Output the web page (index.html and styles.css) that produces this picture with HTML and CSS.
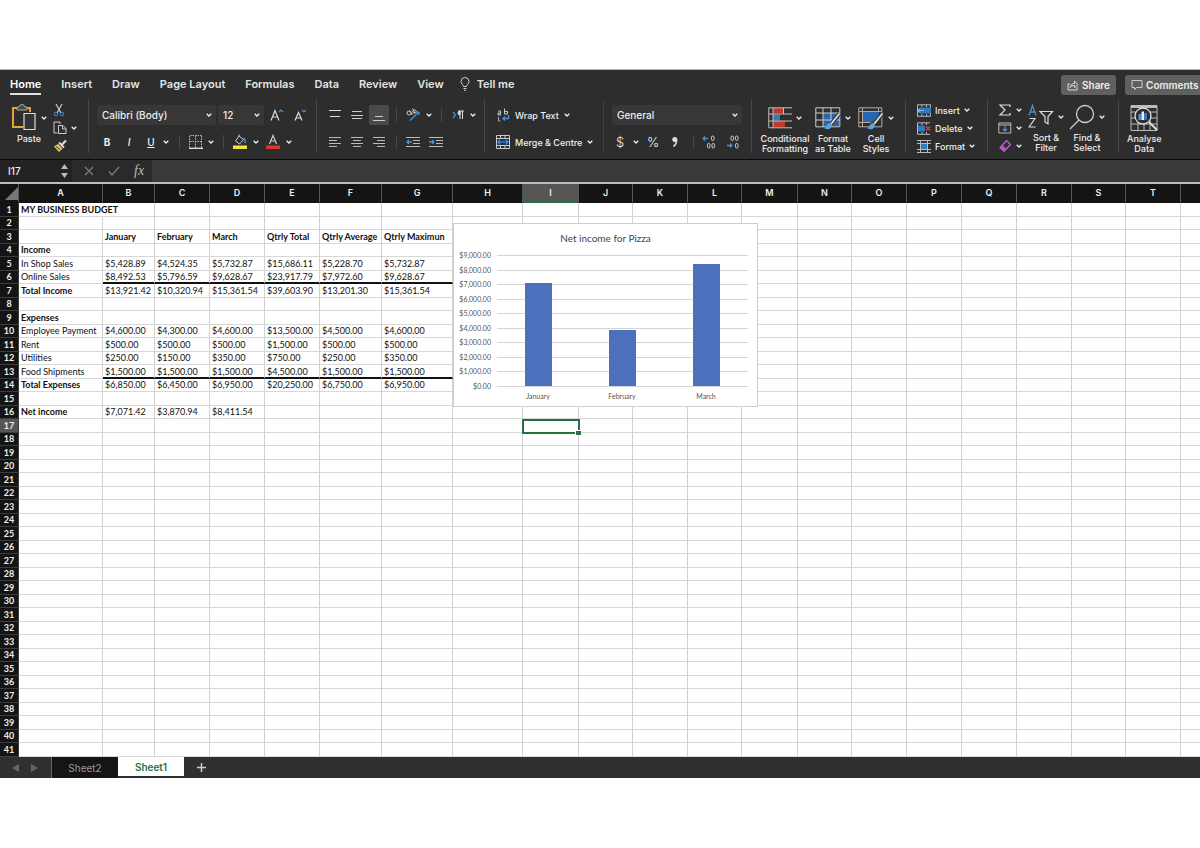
FILE: index.html
```html
<!DOCTYPE html>
<html lang="en">
<head>
<meta charset="utf-8">
<title>My Business Budget</title>
<link rel="stylesheet" href="styles.css">
</head>
<body>
<svg class="defs" aria-hidden="true">
  <symbol id="chev" viewBox="0 0 6 4"><path d="M.7.8 3 3l2.300-2.200" fill="none" stroke="#eee" stroke-width="1.300"/></symbol>
</svg>
<main class="app">
  <header class="tabs">
    <nav class="tab-list">
      <a class="tab tab-active" href="#">Home</a>
      <a class="tab" href="#">Insert</a>
      <a class="tab" href="#">Draw</a>
      <a class="tab" href="#">Page Layout</a>
      <a class="tab" href="#">Formulas</a>
      <a class="tab" href="#">Data</a>
      <a class="tab" href="#">Review</a>
      <a class="tab" href="#">View</a>
      <a class="tab tell" href="#"><svg width="10" height="14" viewBox="0 0 10 14" fill="none" stroke="#ccc"><path d="M3.500 9.500C3.500 7.500 1 7 1 4.500a4 4 0 0 1 8 0C9 7 6.500 7.500 6.500 9.500zM3.500 11.500h3M4 13.300h2"/></svg>Tell me</a>
    </nav>
    <div class="actions">
      <button class="pill"><svg width="12" height="12" viewBox="0 0 12 12" fill="none" stroke="#ddd"><path d="M3 5H1v6h9V8M3 8.500C3.500 5.500 5 4.500 7.500 4.500V2.200L11 5.500 7.500 8.500V6.500C5.500 6.500 4 7 3 8.500z"/></svg>Share</button>
      <button class="pill"><svg width="12" height="12" viewBox="0 0 12 12" fill="none" stroke="#ccc"><path d="M1 1.500h10v7H5.500L3.500 10.800V8.500H1z"/></svg>Comments</button>
    </div>
  </header>

  <section class="ribbon">
    <div class="group clipboard">
      <button class="big"><span class="art">
        <svg width="26" height="27" viewBox="0 0 26 27" fill="none"><path d="M7 4H2v19h10M15 4h4v4" stroke="#e5a33c" stroke-width="2"/><path d="M6 6V3h2.500a2.500 2.500 0 0 1 5 0H16v3z" fill="#444" stroke="#aaa"/><path d="M13 9.500h11v16H13z" fill="#333" stroke="#ddd" stroke-width="1.200"/></svg>
        <svg class="chev"><use href="#chev"/></svg></span>Paste</button>
      <div class="trio">
        <button aria-label="Cut"><svg width="12" height="14" viewBox="0 0 12 14" fill="none"><path d="M3 1l5 9M9 1L4 10" stroke="#ccc" stroke-width="1.200"/><circle cx="3" cy="11" r="1.800" stroke="#4a90d9"/><circle cx="9" cy="11" r="1.800" stroke="#4a90d9"/></svg></button>
        <button aria-label="Copy"><svg width="14" height="14" viewBox="0 0 14 14" fill="none" stroke="#ccc"><path d="M4.500 12H1V1h6v2M5.500 4.500h4.500l3 3V12.500H5.500zM9.500 4.500V8h3.500"/></svg><svg class="chev"><use href="#chev"/></svg></button>
        <button aria-label="Format painter"><svg width="14" height="14" viewBox="0 0 14 14" fill="none"><path d="M13 1.500L8.500 6" stroke="#ddd" stroke-width="2.200"/><path d="M6 3.500l5 5" stroke="#ddd" stroke-width="1.800"/><path d="M5 5l4.500 4.500L6 13 1 7.500z" fill="#e8c75a"/><path d="M3 7.500l4 3" stroke="#333"/></svg></button>
      </div>
    </div>

    <div class="group font">
      <div class="line fields">
        <label class="pick font-name"><select aria-label="Font"><option>Calibri (Body)</option></select><svg class="chev"><use href="#chev"/></svg></label>
        <label class="pick font-size"><select aria-label="Font size"><option>12</option></select><svg class="chev"><use href="#chev"/></svg></label>
        <button class="tool" aria-label="Grow font"><svg width="14" height="14" viewBox="0 0 14 14" fill="none"><path d="M1 12.500L5 2.500l4 10M2.500 9h5" stroke="#ddd" stroke-width="1.200"/><path d="M9 4l2-2 2 2" stroke="#4a90d9" stroke-width="1.200"/></svg></button>
        <button class="tool" aria-label="Shrink font"><svg width="14" height="14" viewBox="0 0 14 14" fill="none"><path d="M2 12.500L5.500 4.500l3.500 8M3.500 10h4" stroke="#ddd" stroke-width="1.200"/><path d="M9 2l2 2 2-2" stroke="#4a90d9" stroke-width="1.200"/></svg></button>
      </div>
      <div class="line styles-row">
        <button class="glyph bold">B</button><button class="glyph italic">I</button><button class="glyph under">U</button><svg class="chev"><use href="#chev"/></svg><i class="sep"></i>
        <button aria-label="Borders"><svg width="14" height="14" viewBox="0 0 14 14" fill="none" stroke="#bbb"><path d="M1 .5h12M1 6.500h12M.5 1v12M6.500 1v12M12.500 1v12" stroke-dasharray="1.500 1"/><path d="M0 13.300h14" stroke="#eee" stroke-width="1.300"/></svg></button><svg class="chev"><use href="#chev"/></svg><i class="sep"></i>
        <button aria-label="Fill colour"><svg width="14" height="16" viewBox="0 0 14 16" fill="none"><path d="M6 2L2.500 7 6.500 10 10.500 5.500z M6 2V.5" stroke="#ccc"/><path d="M10.500 4c1.500 1 2 3 1.500 5" stroke="#4a90d9" stroke-width="1.500"/><path d="M0 11.500h14V15H0z" fill="#f4e636"/></svg></button><svg class="chev"><use href="#chev"/></svg>
        <button aria-label="Font colour"><svg width="14" height="16" viewBox="0 0 14 16" fill="none"><path d="M3.500 10L7 1.500l3.500 8.500M4.800 7h4.400" stroke="#ccc" stroke-width="1.200"/><path d="M0 11.500h14V15H0z" fill="#d93a2b"/></svg></button><svg class="chev"><use href="#chev"/></svg>
      </div>
    </div>

    <div class="group align">
      <div class="line align-row">
        <button aria-label="Top align"><svg width="12" height="12" viewBox="0 0 12 12" stroke="#ddd"><path d="M0 1.500h12M1 7.500h10"/></svg></button>
        <button aria-label="Middle align"><svg width="12" height="12" viewBox="0 0 12 12" stroke="#ccc"><path d="M1 2.500h10M0 6.500h12M1 9.500h10"/></svg></button>
        <button class="on" aria-label="Bottom align"><svg width="12" height="14" viewBox="0 0 12 14" stroke="#ccc"><path d="M2 8.500h8M0 12.500h12"/></svg></button>
        <i class="sep"></i>
        <button aria-label="Orientation"><svg width="14" height="14" viewBox="0 0 14 14" fill="none"><circle cx="3" cy="5" r="2" stroke="#ccc"/><path d="M4 2.500l2.500 4.500M6.500.5L9 5" stroke="#ccc"/><circle cx="8.500" cy="3.500" r="1.700" stroke="#ccc"/><path d="M4 12.500L13 4M13 4h-3M13 4v3" stroke="#4a90d9" stroke-width="1.200"/></svg></button><svg class="chev"><use href="#chev"/></svg>
        <i class="sep"></i>
        <button aria-label="Text direction"><svg width="12" height="10" viewBox="0 0 12 10" fill="none"><path d="M1 2l2.500 3L1 8" stroke="#4a90d9" stroke-width="1.200"/><path d="M8 9V1M10.500 9V1M6.500 1H12" stroke="#ddd"/><path d="M8 1a2 2 0 0 0 0 4z" fill="#ddd" stroke="#ddd"/></svg></button><svg class="chev"><use href="#chev"/></svg>
      </div>
      <div class="line align-row">
        <button aria-label="Align left"><svg width="12" height="12" viewBox="0 0 12 12" stroke="#bbb"><path d="M0 1.500h12M0 4.500h8M0 7.500h12M0 10.500h8"/></svg></button>
        <button aria-label="Align centre"><svg width="12" height="12" viewBox="0 0 12 12" stroke="#bbb"><path d="M0 1.500h12M2 4.500h8M0 7.500h12M2 10.500h8"/></svg></button>
        <button aria-label="Align right"><svg width="12" height="12" viewBox="0 0 12 12" stroke="#bbb"><path d="M0 1.500h12M4 4.500h8M0 7.500h12M4 10.500h8"/></svg></button>
        <i class="sep"></i>
        <button aria-label="Decrease indent"><svg width="14" height="12" viewBox="0 0 14 12" fill="none" stroke="#bbb"><path d="M0 1.500h14M7 4.500h7M7 7.500h7M0 10.500h14"/><path d="M6 6H1M3 4L1 6l2 2" stroke="#4a90d9" stroke-width="1.300"/></svg></button>
        <button class="indent" aria-label="Increase indent"><svg width="14" height="12" viewBox="0 0 14 12" fill="none" stroke="#bbb"><path d="M0 1.500h14M7 4.500h7M7 7.500h7M0 10.500h14"/><path d="M0 6h5M3 4l2 2-2 2" stroke="#4a90d9" stroke-width="1.300"/></svg></button>
      </div>
    </div>

    <div class="group wrap">
      <button class="line labelled"><svg width="14" height="14" viewBox="0 0 14 14" fill="none"><path d="M2 3h2.500v4H2V5h2.500M8.500.5V6h3V3.500h-3" stroke="#ccc"/><path d="M2.500 9v4h2" stroke="#aaa"/><path d="M12.500 7v3.500H7M9 8.500l-2 2 2 2" stroke="#4a90d9" stroke-width="1.400"/></svg>Wrap Text<svg class="chev"><use href="#chev"/></svg></button>
      <button class="line labelled"><svg width="14" height="14" viewBox="0 0 14 14" fill="none"><path d="M1 4h12v6H1z" fill="#173a5e"/><path d="M.5.500h13v13H.5zM.5 3.500h13M.5 10.500h13M4.500.5v3M9 .5v3M4.500 10.500v3M9 10.500v3" stroke="#ccc"/><path d="M2 7h10M4 5L2 7l2 2M10 5l2 2-2 2" stroke="#4a90d9" stroke-width="1.200"/></svg>Merge &amp; Centre<svg class="chev"><use href="#chev"/></svg></button>
    </div>

    <div class="group number">
      <div class="line"><label class="pick format"><select aria-label="Number format"><option>General</option></select><svg class="chev"><use href="#chev"/></svg></label></div>
      <div class="line number-row">
        <button class="money">$</button><svg class="chev"><use href="#chev"/></svg><button class="money">%</button>
        <button aria-label="Comma style"><svg width="8" height="12" viewBox="0 0 8 12"><circle cx="3.800" cy="3.500" r="2.500" fill="#ddd"/><path d="M5.500 3.500C5.700 7 4.500 9 2.500 10.500" fill="none" stroke="#ddd" stroke-width="1.600"/></svg></button>
        <i class="sep"></i>
        <button aria-label="Increase decimal"><svg width="14" height="14" viewBox="0 0 14 14" fill="none"><path d="M6 3.500H1M3 1.500l-2 2 2 2" stroke="#4a90d9" stroke-width="1.300"/><rect x="9.500" y="1" width="2.500" height="4.500" rx="1.200" stroke="#ccc"/><rect x="5.500" y="8.500" width="2.500" height="4.500" rx="1.200" stroke="#ccc"/><rect x="10" y="8.500" width="2.500" height="4.500" rx="1.200" stroke="#ccc"/></svg></button>
        <button aria-label="Decrease decimal"><svg width="14" height="14" viewBox="0 0 14 14" fill="none"><rect x="5" y="1" width="2.500" height="4.500" rx="1.200" stroke="#ccc"/><rect x="9.500" y="1" width="2.500" height="4.500" rx="1.200" stroke="#ccc"/><rect x="9.500" y="8.500" width="2.500" height="4.500" rx="1.200" stroke="#ccc"/><path d="M1 10.500h5M4 8.500l2 2-2 2" stroke="#4a90d9" stroke-width="1.300"/></svg></button>
      </div>
    </div>

    <div class="group looks">
      <button class="big"><span class="art">
        <svg width="24" height="22" viewBox="0 0 24 22" fill="none"><path d="M5 1h10v5H5zM5 14h12v6H5z" fill="#c0392b"/><path d="M5 7.500h7v6H5z" fill="#2f78c4"/><path d="M24 .8H.8v20H24M.8 7H24M.8 14H24M5 1v20M15.500 1v6" stroke="#c9c2b6"/></svg>
        <svg class="chev"><use href="#chev"/></svg></span>Conditional<br>Formatting</button>
      <button class="big"><span class="art">
        <svg width="26" height="26" viewBox="0 0 26 26" fill="none"><path d="M8 8h16v13H8z" fill="#2765ad"/><path d="M.8 2.800h24v19H.8zM.8 8h24M.8 15h24M8 3v19M16 3v19" stroke="#ccc"/><path d="M24.500 8.500L16 19" stroke="#333" stroke-width="4"/><path d="M24.500 8.500L16 19" stroke="#ddd" stroke-width="1.800"/><path d="M9 23c3 0 2-4.500 6-5l2 2c0 4-4 5.500-8 3z" fill="#5aa0e6"/></svg>
        <svg class="chev"><use href="#chev"/></svg></span>Format<br>as Table</button>
      <button class="big"><span class="art">
        <svg width="26" height="26" viewBox="0 0 26 26" fill="none"><path d="M5 7h16v10H5z" fill="#2765ad"/><path d="M.8 2.800h23v19H.8zM.8 6.500h23M4.500 3v19M20.500 3v4M.8 17.500h12" stroke="#b9aa98"/><path d="M24.500 8.500L16 19" stroke="#333" stroke-width="4"/><path d="M24.500 8.500L16 19" stroke="#ddd" stroke-width="1.800"/><path d="M9 23c3 0 2-4.500 6-5l2 2c0 4-4 5.500-8 3z" fill="#5aa0e6"/></svg>
        <svg class="chev"><use href="#chev"/></svg></span>Cell<br>Styles</button>
    </div>

    <div class="group cells">
      <button class="labelled"><svg width="14" height="13" viewBox="0 0 14 13" fill="none"><path d="M.5.800h13v11.500H.5zM5 1v2M9.500 1v2M5 10v2M9.500 10v2" stroke="#bbb"/><path d="M3 3.500h11v6H3z" fill="#2f78c4"/><path d="M7 6.500H1M3 4.500l-2 2 2 2" stroke="#7ab8f5" stroke-width="1.200"/></svg>Insert<svg class="chev"><use href="#chev"/></svg></button>
      <button class="labelled"><svg width="14" height="13" viewBox="0 0 14 13" fill="none"><path d="M13 .8H.5v11.500H13M5 1v2M9.500 1v2M5 10v2M9.500 10v2" stroke="#bbb"/><path d="M1 3.500h7v6H1z" fill="#2f78c4"/><path d="M9 4.500l4 4M13 4.500l-4 4" stroke="#d9483b" stroke-width="1.300"/></svg>Delete<svg class="chev"><use href="#chev"/></svg></button>
      <button class="labelled"><svg width="14" height="13" viewBox="0 0 14 13" fill="none"><path d="M3.500 3.500h7v6h-7z" fill="#2f78c4"/><path d="M0 3.500h14M0 9.500h14M3.500 0v13M10.500 0v13M0 .5h14M0 12.500h14" stroke="#bbb"/></svg>Format<svg class="chev"><use href="#chev"/></svg></button>
    </div>

    <div class="group editing">
      <div class="trio">
        <button aria-label="AutoSum"><svg width="14" height="12" viewBox="0 0 14 12" fill="none" stroke="#ddd" stroke-width="1.200"><path d="M12 3V1H2l5 5-5 5h10V9"/></svg><svg class="chev"><use href="#chev"/></svg></button>
        <button aria-label="Fill"><svg width="14" height="12" viewBox="0 0 14 12" fill="none"><path d="M.8 1h12v10H.8zM.8 3h12" stroke="#bbb"/><path d="M7 4v5M5 7l2 2 2-2" stroke="#4a90d9" stroke-width="1.300"/></svg><svg class="chev"><use href="#chev"/></svg></button>
        <button aria-label="Clear"><svg width="14" height="14" viewBox="0 0 14 14" fill="none"><path d="M8.500 1.500l4 4L6 12.500 2 8.500z" stroke="#c56bd6" stroke-width="1.200"/><path d="M4.500 6L8.500 10 6 12.500 2 8.500z" fill="#b057c4"/></svg><svg class="chev"><use href="#chev"/></svg></button>
      </div>
      <button class="big"><span class="art">
        <svg width="26" height="26" viewBox="0 0 26 26" fill="none"><path d="M1 11.500L4.500 1.500l3.500 10M2.200 8h4.600" stroke="#4a90d9" stroke-width="1.300"/><path d="M1.500 14.500h5.500L1 23h6.500" stroke="#ddd" stroke-width="1.200"/><path d="M12 7.500h12.500l-4.500 5v7.500l-3-2v-5.500z" stroke="#ddd" stroke-width="1.200"/></svg>
        <svg class="chev"><use href="#chev"/></svg></span>Sort &amp;<br>Filter</button>
      <button class="big"><span class="art">
        <svg width="26" height="26" viewBox="0 0 26 26" fill="none" stroke="#ccc" stroke-width="1.300"><circle cx="16" cy="10" r="8.500"/><path d="M10 16L1 25"/></svg>
        <svg class="chev"><use href="#chev"/></svg></span>Find &amp;<br>Select</button>
    </div>

    <div class="group analyse">
      <button class="big"><span class="art">
        <svg width="28" height="28" viewBox="0 0 28 28" fill="none"><path d="M1 1.500h26v25H1zM1 8h26M1 14h26M1 20h26M8 8v18M20 8v18M14 20v6" stroke="#bbb"/><path d="M1 1h26v3H1z" fill="#bbb"/><circle cx="13" cy="12" r="8" fill="#2d2d2d" stroke="#ddd" stroke-width="1.300"/><path d="M8.500 10h3v6h-3z" fill="#4a90d9"/><path d="M11.500 7.500H14V16h-2.500z" fill="#eee"/><path d="M14 9h3v7h-3z" fill="#2f78c4"/><path d="M19 18l8 8" stroke="#ddd" stroke-width="2"/></svg></span>Analyse<br>Data</button>
    </div>
  </section>

  <section class="formula">
    <div class="name-box">
      <input aria-label="Name box" value="I17">
      <svg width="7" height="14" viewBox="0 0 7 14" fill="#bbb"><path d="M3.500 0L7 5H0zM3.500 14L0 9h7z"/></svg>
    </div>
    <div class="fx">
      <button aria-label="Cancel"><svg width="10" height="10" viewBox="0 0 10 10" stroke="#777" stroke-width="1.400"><path d="M1 1l8 8M9 1L1 9"/></svg></button>
      <button aria-label="Enter"><svg width="12" height="10" viewBox="0 0 12 10" fill="none" stroke="#777" stroke-width="1.500"><path d="M1 5.500L4 9l7-8"/></svg></button>
      <button class="fx-label">fx</button>
    </div>
    <input class="formula-input" aria-label="Formula">
  </section>

  <section class="sheet">
    <table class="grid">
      <colgroup id="cols"></colgroup>
      <thead><tr id="heads"></tr></thead>
      <tbody id="rows"></tbody>
    </table>
    <figure class="chart">
      <figcaption>Net income for Pizza</figcaption>
      <svg id="plot" class="plot" viewBox="0 0 303 158" role="img" aria-label="Net income by month"></svg>
    </figure>
  </section>

  <footer class="sheets">
    <div class="arrows">
      <button aria-label="Previous sheet"><svg width="7" height="8" viewBox="0 0 7 8"><path d="M7 0v8L0 4z" fill="#666"/></svg></button>
      <button aria-label="Next sheet"><svg width="7" height="8" viewBox="0 0 7 8"><path d="M0 0v8l7-4z" fill="#666"/></svg></button>
    </div>
    <button class="sheet-tab">Sheet2</button>
    <button class="sheet-tab sheet-active">Sheet1</button>
    <button class="add" aria-label="Add sheet"><svg width="9" height="9" viewBox="0 0 9 9"><path d="M4.500 0v9M0 4.500h9" stroke="#ccc" stroke-width="1.500"/></svg></button>
  </footer>
</main>
<script src="script.js"></script>
</body>
</html>
```

FILE: styles.css
```css
* { box-sizing: border-box; }
body { margin: 0; padding-top: 69px; background: #fff; font-family: Inter, "Liberation Sans", sans-serif; }
button, input, select { font: inherit; color: inherit; border: 0; background: none; padding: 0; margin: 0; }
button { display: flex; align-items: center; justify-content: center; }
svg { flex: none; display: block; }
.defs { position: absolute; width: 0; height: 0; }
.chev { width: 6px; height: 4px; }
.app { color: #eee; overflow: hidden; border-top: 1px solid #bbb; }

.tabs { display: flex; justify-content: space-between; background: #2d2d2d; height: 28px; padding-left: 10px; }
.tab-list { display: flex; gap: 20px; }
.tab { color: #e4e4e4; text-decoration: none; font-size: 11px; font-weight: 600; line-height: 14px; padding: 7px 0 2px; height: 25px; white-space: nowrap; }
.tab-active { color: #fff; border-bottom: 2px solid #ddd; }
.tell { display: flex; gap: 7px; margin-left: -4px; }
.actions { display: flex; gap: 9px; padding-top: 5px; width: 139px; flex: none; }
.pill { flex: none; gap: 3px; height: 20px; padding: 0 6px; background: #606060; border-radius: 3px; font-size: 10px; font-weight: 600; }

.ribbon { display: flex; background: #2d2d2d; padding: 2px 0 6px; border-bottom: 1px solid #0c0c0c; }
.group { flex: none; height: 53px; border-right: 1px solid #484848; font-size: 9px; font-weight: 500; }
.line { display: flex; align-items: center; height: 20px; }
.font, .align, .wrap, .number { display: flex; flex-direction: column; gap: 7px; padding-top: 5px; }
.sep { width: 1px; height: 14px; background: #484848; }
.big { flex-direction: column; justify-content: flex-start; gap: 3px; line-height: 10px; font-weight: 500; text-align: center; white-space: nowrap; }
.art { display: flex; align-items: center; gap: 4px; height: 27px; }
.trio { display: grid; grid-template-rows: repeat(3, 18px); align-items: center; }
.trio button { justify-content: flex-start; gap: 4px; }

.clipboard { display: flex; width: 89px; gap: 6px; padding: 4px 0 0 11px; }
.clipboard .trio, .editing .trio { margin-top: -3px; }

.font { width: 228px; padding-left: 8px; }
.fields { gap: 2px; }
.pick { position: relative; display: block; height: 20px; background: #373737; border-radius: 3px; }
.pick select { appearance: none; width: 100%; height: 20px; padding: 0 5px; font-size: 10px; }
.pick .chev { position: absolute; right: 4px; top: 8px; pointer-events: none; }
.font-name { width: 119px; }
.font-size { width: 46px; }
.tool { width: 21px; }
.styles-row { display: grid; grid-template-columns: 20px 24px 20px 10px 16px 18px 12px 12px 22px 10px 24px 8px; justify-items: center; }
.glyph { font-size: 10px; }
.bold { font-weight: 700; }
.italic { font-style: italic; }
.under { text-decoration: underline; }

.align { width: 168px; padding-left: 7px; }
.align-row { display: grid; grid-template-columns: 22px 22px 22px 12px 22px 10px 14px 20px 10px; justify-items: center; }
.on { width: 20px; height: 20px; background: #4a4a4a; border-radius: 2px; }
.indent { grid-column: span 2; }

.wrap { width: 119px; padding-left: 11px; border-right-color: #404040; }
.labelled { gap: 5px; justify-content: flex-start; white-space: nowrap; }

.number { width: 148px; padding-left: 8px; }
.format { width: 130px; }
.number-row { display: grid; grid-template-columns: 16px 16px 18px 26px 10px 22px 26px; justify-items: center; }
.money { font-size: 13px; font-weight: 300; }

.looks { display: grid; grid-template-columns: 50px 44px 40px; gap: 1px; width: 154px; padding: 4px 0 0 8px; }
.cells { display: grid; grid-template-rows: repeat(3, 18px); width: 82px; padding: 1px 0 0 11px; }
.cells .labelled { gap: 4px; }
.editing { display: flex; gap: 7px; width: 131px; padding: 4px 0 0 10px; }
.editing .big { width: 34px; }
.analyse { flex: 1; padding: 4px 0 0 8px; border-right: 0; }

.formula { display: flex; height: 24px; background: #2a2a2a; border-bottom: 2px solid #bdbdbd; }
.name-box { display: flex; align-items: center; width: 72px; padding: 0 4px 0 8px; background: #232323; }
.name-box input { flex: 1; min-width: 0; font-size: 10px; font-weight: 500; }
.fx { display: flex; align-items: center; gap: 14px; width: 80px; padding-left: 12px; }
.fx-label { font: italic 14px "Liberation Serif", serif; color: #bbb; }
.formula-input { flex: 1; min-width: 0; background: #393939; }

.sheet { position: relative; background: #fff; color: #111; font-family: Lato, Carlito, sans-serif; }
.grid { width: 100%; table-layout: fixed; border-collapse: separate; border-spacing: 0; font-size: 9px; line-height: 12px; }
.grid th, .grid td { padding: 0; height: 13px; border-right: 1px solid #d2d2d2; border-bottom: 1px solid #d8d8d8; white-space: nowrap; }
.grid tbody tr:nth-child(odd) > * { height: 14px; }
.grid th { background: #141414; color: #eee; font-weight: 700; border-color: #3c3c3c; }
.grid thead th { height: 19px; border-right-color: #555; border-bottom-color: #141414; font-family: Inter, sans-serif; font-weight: 600; }
.grid td { padding-left: 2px; overflow: visible; }
.grid td:last-child, .grid th:last-child { border-right: 0; }
.grid td.strong { font-weight: 700; }
.grid td.sum { border-bottom: 2px solid #111; line-height: 11px; }
.grid .spill { border-right-color: transparent; }
.grid thead th.hot { background: #565656; border-bottom-color: #1f7244; }
.grid tbody th.hot { background: #565656; }
.corner svg { margin-left: auto; }
.active { position: relative; }
.active::before { content: ""; position: absolute; inset: 0 -2px -2px -1px; border: 2px solid #2b6e43; }
.active::after { content: ""; position: absolute; right: -3px; bottom: -3px; width: 5px; height: 4px; background: #2b6e43; border: solid #fff; border-width: 1px 0 0 1px; }

.chart { position: absolute; left: 453px; top: 39px; width: 305px; height: 184px; margin: 0; background: #fff; border: 1px solid #cfcfcf; }
.chart figcaption { padding-top: 7px; line-height: 14px; font-size: 10px; text-align: center; color: #444; }
.plot { width: 303px; height: 158px; }
.plot text { font-size: 7px; fill: #555; }
.plot line { stroke: #d4d4d4; }
.plot rect { fill: #4d70bd; }

.sheets { display: flex; height: 21px; background: #303030; font-size: 10px; }
.arrows { display: flex; align-items: center; gap: 12px; width: 52px; padding-left: 12px; border-right: 1px solid #666; }
.sheet-tab { width: 66px; color: #999; background: #151515; }
.sheet-active { color: #1f7244; background: #fff; font-weight: 600; height: 19px; }
.add { width: 34px; }
```

FILE: script.js
```js
const widths = [19, 84, 52, 55, 55, 55, 62, 71, 70, 56, 54, 55, 54, 56, 54, 55, 55, 55, 55, 54, 55, 0];
const letters = "ABCDEFGHIJKLMNOPQRST".split("").concat("");
const data = {
  1: ["MY BUSINESS BUDGET"],
  3: ["", "January", "February", "March", "Qtrly Total", "Qtrly Average", "Qtrly Maximun"],
  4: ["Income"],
  5: ["In Shop Sales", "$5,428.89", "$4,524.35", "$5,732.87", "$15,686.11", "$5,228.70", "$5,732.87"],
  6: ["Online Sales", "$8,492.53", "$5,796.59", "$9,628.67", "$23,917.79", "$7,972.60", "$9,628.67"],
  7: ["Total Income", "$13,921.42", "$10,320.94", "$15,361.54", "$39,603.90", "$13,201.30", "$15,361.54"],
  9: ["Expenses"],
  10: ["Employee Payment", "$4,600.00", "$4,300.00", "$4,600.00", "$13,500.00", "$4,500.00", "$4,600.00"],
  11: ["Rent", "$500.00", "$500.00", "$500.00", "$1,500.00", "$500.00", "$500.00"],
  12: ["Utilities", "$250.00", "$150.00", "$350.00", "$750.00", "$250.00", "$350.00"],
  13: ["Food Shipments", "$1,500.00", "$1,500.00", "$1,500.00", "$4,500.00", "$1,500.00", "$1,500.00"],
  14: ["Total Expenses", "$6,850.00", "$6,450.00", "$6,950.00", "$20,250.00", "$6,750.00", "$6,950.00"],
  16: ["Net income", "$7,071.42", "$3,870.94", "$8,411.54"]
};
const strongRows = [1, 3];
const strongLabels = [4, 7, 9, 14, 16];

document.getElementById("cols").innerHTML = widths
  .map(w => w ? `<col style="width:${w}px">` : "<col>").join("");
document.getElementById("heads").innerHTML =
  '<th class="corner"><svg width="13" height="13" viewBox="0 0 13 13"><path d="M13 0v13H0z" fill="#777"/></svg></th>' +
  letters.map(l => `<th${l === "I" ? ' class="hot"' : ""}>${l}</th>`).join("");

let body = "";
for (let r = 1; r <= 41; r++) {
  body += `<tr><th${r === 17 ? ' class="hot"' : ""}>${r}</th>`;
  letters.forEach((l, c) => {
    const names = [];
    if (strongRows.includes(r) || (c === 0 && strongLabels.includes(r))) names.push("strong");
    if ((r === 6 || r === 13) && c > 0 && c < 7) names.push("sum");
    if (r === 1 && c === 0) names.push("spill");
    if (r === 17 && l === "I") names.push("active");
    body += `<td class="${names.join(" ")}">${(data[r] || [])[c] || ""}</td>`;
  });
  body += "</tr>";
}
document.getElementById("rows").innerHTML = body;

const axisBase = 141;
const axisTop = 10;
let plotMarkup = "";
for (let k = 0; k <= 9; k++) {
  const y = Math.round(axisBase - k * (axisBase - axisTop) / 9);
  plotMarkup += `<line x1="43" x2="294" y1="${y + 0.5}" y2="${y + 0.5}"/>`;
  plotMarkup += `<text x="37" y="${y + 3}" text-anchor="end">$${k ? k + ",000" : "0"}.00</text>`;
}
[["January", 7071.42, 84], ["February", 3870.94, 168], ["March", 8411.54, 252]].forEach(([name, value, x]) => {
  const h = Math.round(value / 9000 * (axisBase - axisTop));
  plotMarkup += `<rect x="${x - 13}" y="${axisBase - h}" width="27" height="${h}"/>`;
  plotMarkup += `<text x="${x}" y="154" text-anchor="middle">${name}</text>`;
});
document.getElementById("plot").innerHTML = plotMarkup;
```
